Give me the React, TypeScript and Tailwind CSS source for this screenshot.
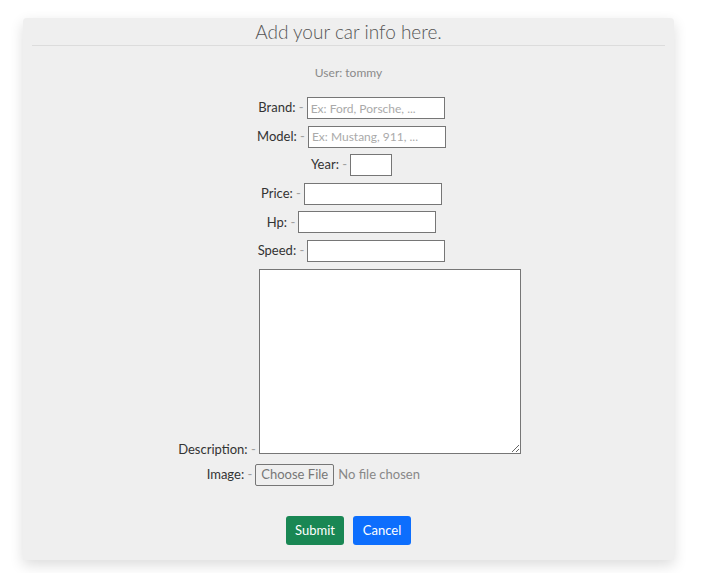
import React from 'react'

const font = { fontFamily: 'Lato, "Open Sans", sans-serif' }

function Label({ text }: { text: string }) {
  return (
    <span className="text-[13px] font-normal text-[#333] mr-[3px]">
      {text} <span className="text-[#a0a0a0]">-</span>
    </span>
  )
}

function Row({ label, children }: { label: string; children: React.ReactNode }) {
  return (
    <div className="flex items-center justify-center h-[22px] pl-[6px]">
      <Label text={label} />
      {children}
    </div>
  )
}

const inputCls =
  'h-[22px] border border-[#767676] bg-white px-[3px] text-[12px] text-[#333] placeholder:text-[#aaa] outline-none'

export default function App() {
  return (
    <div className="min-h-[573px] bg-white pt-[18px]" style={font}>
      <div className="ml-[23px] w-[651px] h-[542px] bg-[#efefef] rounded-t-[4px] shadow-[0_5px_14px_rgba(0,0,0,0.14)] px-[9px]">
        <h1 className="text-center text-[19px] font-light text-[#555] pt-[2px] leading-[24px] pb-[1px] border-b border-[#dcdcdc]">
          Add your car info here.
        </h1>
        <p className="text-center text-[12px] text-[#8a8a8a] mt-[19px] leading-[16px]">User: tommy</p>

        <div className="flex flex-col gap-[6.6px] mt-[16px]">
          <Row label="Brand:">
            <input className={`${inputCls} w-[138px]`} placeholder="Ex: Ford, Porsche, ..." />
          </Row>
          <Row label="Model:">
            <input className={`${inputCls} w-[138px]`} placeholder="Ex: Mustang, 911, ..." />
          </Row>
          <Row label="Year:">
            <input className={`${inputCls} w-[42px]`} />
          </Row>
          <Row label="Price:">
            <input className={`${inputCls} w-[138px]`} />
          </Row>
          <Row label="Hp:">
            <input className={`${inputCls} w-[138px]`} />
          </Row>
          <Row label="Speed:">
            <input className={`${inputCls} w-[138px]`} />
          </Row>
          <div className="flex items-end justify-center pl-[2px]">
            <span className="mb-[-6px]">
              <Label text="Description:" />
            </span>
            <textarea className="w-[262px] h-[185px] border border-[#767676] bg-white outline-none block" />
          </div>
          <div className="flex items-center justify-center h-[22px] pl-[6px] mt-[4px]">
            <Label text="Image:" />
            <div className="w-[241px] flex items-center">
              <span className="h-[22px] px-[5px] border border-[#767676] rounded-[2px] text-[13px] text-[#777] flex items-center">
                Choose File
              </span>
              <span className="ml-[4px] text-[13px] text-[#888]">No file chosen</span>
            </div>
          </div>
        </div>

        <div className="flex justify-center gap-[9px] mt-[30px]">
          <button className="w-[58px] h-[29px] rounded-[3px] bg-[#198754] text-white text-[13px]">Submit</button>
          <button className="w-[58px] h-[29px] rounded-[3px] bg-[#0d6efd] text-white text-[13px]">Cancel</button>
        </div>
      </div>
    </div>
  )
}
